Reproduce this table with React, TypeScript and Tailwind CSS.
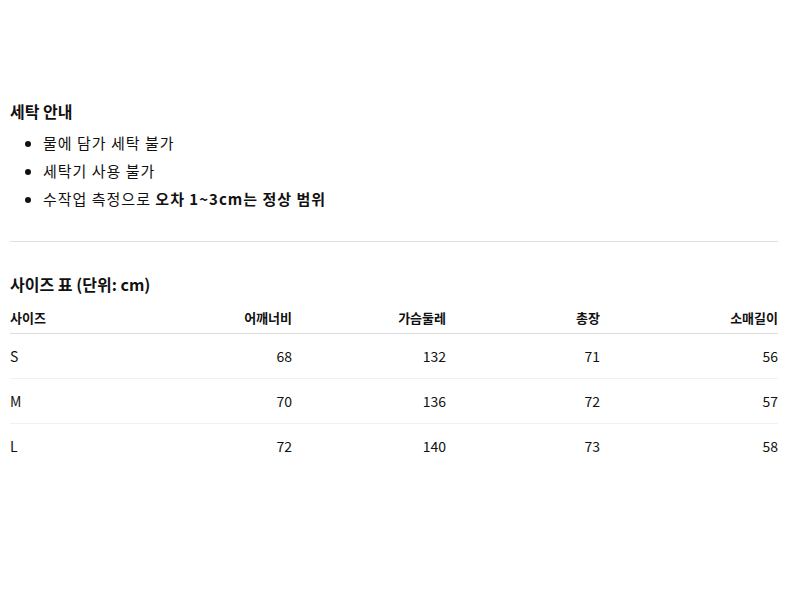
const WASH = ["물에 담가 세탁 불가", "세탁기 사용 불가"];

const COLUMNS = ["사이즈", "어깨너비", "가슴둘레", "총장", "소매길이"];

const ROWS: (string | number)[][] = [
  ["S", 68, 132, 71, 56],
  ["M", 70, 136, 72, 57],
  ["L", 72, 140, 73, 58],
];

const GRID = "grid grid-cols-[128px_154px_154px_154px_178px]";

export default function App() {
  return (
    <div
      className="min-h-[600px] bg-white text-[#111] pl-[10px] pt-[99px]"
      style={{ fontFamily: '"Noto Sans CJK KR", "Noto Sans", sans-serif' }}
    >
      <div className="w-[768px]">
        {/* 세탁 안내 */}
        <h3 className="text-[16px] font-bold leading-[24px] mb-[6px]">세탁 안내</h3>
        <ul className="list-disc pl-[33px] text-[15px] leading-[28px] tracking-[1px]">
          {WASH.map((t) => (
            <li key={t}>{t}</li>
          ))}
          <li>
            수작업 측정으로 <strong className="font-bold">오차 1~3cm는 정상 범위</strong>
          </li>
        </ul>

        <hr className="border-0 border-t border-[#e0e0e0] mt-[28px] mb-[30px]" />

        {/* 사이즈 표 */}
        <h3 className="text-[16px] font-bold leading-[24px] mb-[6px]">사이즈 표 (단위: cm)</h3>
        <div className={`${GRID} h-[32px] items-center border-b border-[#dcdcdc] text-[13px] font-bold`}>
          {COLUMNS.map((c, i) => (
            <div key={c} className={i === 0 ? "text-left" : "text-right"}>
              {c}
            </div>
          ))}
        </div>
        {ROWS.map((row, r) => (
          <div
            key={r}
            className={`${GRID} h-[45px] items-center text-[14px] ${r < ROWS.length - 1 ? "border-b border-[#f0f0f0]" : ""}`}
          >
            {row.map((v, i) => (
              <div key={i} className={i === 0 ? "text-left" : "text-right"}>
                {v}
              </div>
            ))}
          </div>
        ))}
      </div>
    </div>
  );
}
